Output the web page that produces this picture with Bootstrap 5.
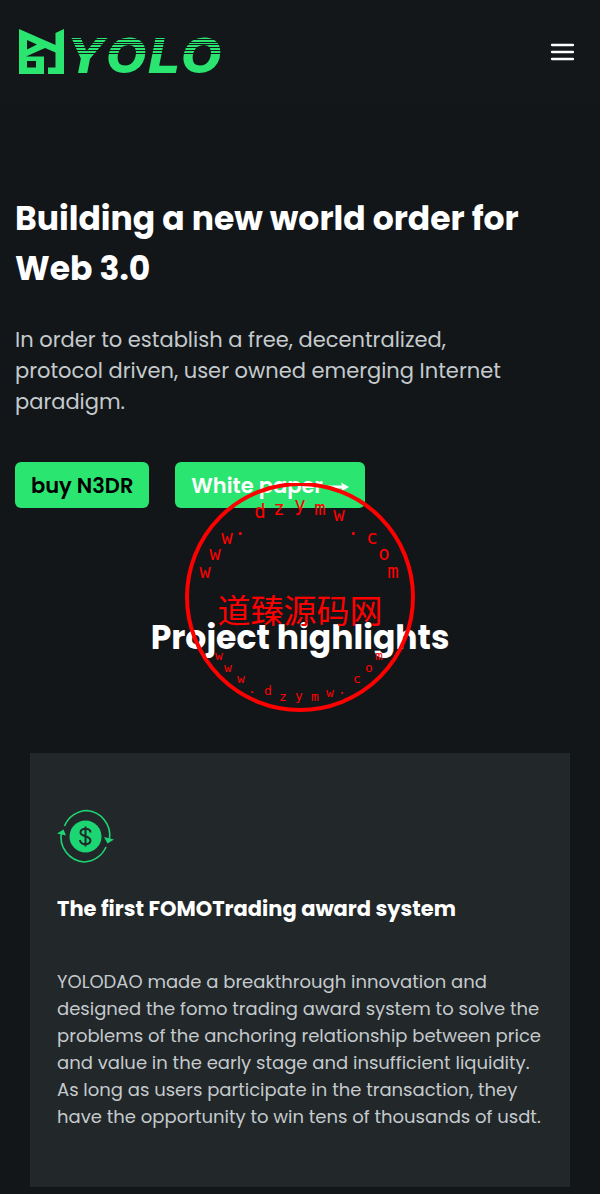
<!DOCTYPE html>
<html lang="en">
<head>
<meta charset="utf-8">
<meta name="viewport" content="width=device-width, initial-scale=1">
<title>YOLO</title>
<link href="https://cdn.jsdelivr.net/npm/bootstrap@5.3.0/dist/css/bootstrap.min.css" rel="stylesheet">
<style>
body{background:#121619;color:#fff;font-family:Poppins,Inter,"Noto Sans CJK SC",sans-serif;border-right:1px solid #fff}
.site-bar{height:104px;padding:0 26px 0 19px;background:#13171a}
.menu-btn{padding:0;border:0;background:none;color:#fff}
.hero{padding:90px 15px 0}
.hero h1,.section-title{font-size:33px;line-height:50px;font-weight:700;margin:0}
.hero h1{max-width:540px}
.lede{font-size:21px;line-height:31px;color:#c5cacd;margin:30px 0 45px;max-width:500px}
.cta{height:46px;padding:0 16px;border:0;border-radius:6px;background:#2be571;font-size:21px;font-weight:600;line-height:48px}
.cta:hover{background:#25cf65}
.cta-row{gap:26px}
.highlights{padding-top:105px}
.feature{margin:90px 30px 7px;padding:55px 27px 57px;background:#22272a}
.feature h3{font-size:21px;line-height:32px;font-weight:700;margin:28px 0 43px}
.feature p{font-size:18px;line-height:27px;color:#c5cacd;margin:0}
.stamp{top:379px;left:50%;transform:translateX(-50%);pointer-events:none;fill:red;text-anchor:middle;font-family:"DejaVu Sans Mono",monospace}
.stamp .outer-text{font-size:19px}
.stamp .inner-text{font-size:13px}
.stamp .stamp-name{font:33px "Noto Sans CJK SC",sans-serif}
.wordmark{font:italic 700 49px "Liberation Sans",sans-serif;stroke-width:2px}
</style>
</head>
<body>
<header class="site-bar d-flex align-items-center justify-content-between">
<a href="#" aria-label="YOLO home">
<svg class="d-block overflow-visible" width="204" height="46" viewBox="0 0 204 46">
<path fill="#2be571" fill-rule="evenodd" d="M0 0 36.500 16V4L45 0V45H29V38.500H36.500V23.500L26 19 7 27.500H25V45H0ZM8 11V20.500L18 15.500ZM8 32V38.500H17V32Z"/>
<text class="wordmark" y="43" x="50 88 130 163" fill="#2be571" stroke="#2be571">YOLO</text>
<path stroke="#13171a" d="M50 10.500H204M50 13.500H204M50 15.500H204M50 18.500H204M50 21.500H204M50 24.500H204"/>
</svg>
</a>
<button class="menu-btn" type="button" aria-label="Menu"><svg class="d-block" width="24" height="18" viewBox="0 0 24 18"><path stroke="currentColor" stroke-width="2.300" stroke-linecap="round" d="M2 2H23M2 9H23M2 16H23"/></svg></button>
</header>
<main class="position-relative">
<section class="hero">
<h1>Building a new world order for Web 3.0</h1>
<p class="lede">In order to establish a free, decentralized, protocol driven, user owned emerging Internet paradigm.</p>
<div class="cta-row d-flex">
<button type="button" class="btn cta text-black">buy N3DR</button>
<button type="button" class="btn cta text-white">White paper <svg width="21" height="12" viewBox="0 0 21 12" aria-hidden="true"><path fill="#fff" d="M0 4.500H14L13 1.500 21 6 13 10.500 14 7.500H0Z"/></svg></button>
</div>
</section>
<section class="highlights">
<h2 class="section-title text-center">Project highlights</h2>
<article class="feature">
<svg class="d-block" width="57" height="57" viewBox="0 0 57 57" fill="none" stroke="#1bd673" stroke-width="1.600" aria-hidden="true">
<path d="M7.500 18A25 25 0 0 1 30 2.500A25 25 0 0 1 52.500 31M49 39A25 25 0 0 1 27 54A25 25 0 0 1 4.500 24"/>
<path fill="#1bd673" stroke="none" d="M47 29 57 31.500 50.500 35.500ZM0 25.500 6.500 21.500 9 27.500Z"/>
<circle cx="28.500" cy="28.500" r="16" fill="#1bd673" stroke="none"/>
<path stroke="#22272a" stroke-width="2" d="M28.500 18.500V38.500M33.500 24.500C33.500 19.500 23.500 19.500 23.500 24.500C23.500 29 33.500 27.500 33.500 32.500C33.500 37.500 23 37.500 23 32"/>
</svg>
<h3>The first FOMOTrading award system</h3>
<p>YOLODAO made a breakthrough innovation and designed the fomo trading award system to solve the problems of the anchoring relationship between price and value in the early stage and insufficient liquidity. As long as users participate in the transaction, they have the opportunity to win tens of thousands of usdt.</p>
</article>
</section>
<svg class="stamp position-absolute" width="230" height="230" viewBox="186 483 230 230">
<circle cx="301" cy="597" r="113" fill="none" stroke="red" stroke-width="4"/>
<g class="outer-text"><text x="206 216 228 241 261 280 301 321 340 354 373 385 394" y="578 560 544 535 518 515 511 515 521 535 544 560 578">www.dzymw.com</text></g>
<text class="stamp-name" x="301" y="623">道臻源码网</text>
<g class="inner-text"><text x="220 229 242 253 269 284 300 316 331 343 358 370 380" y="660 672 683 693 695 701 700 701 697 694 683 672 660">www.dzymw.com</text></g>
</svg>
</main>
<script src="https://cdn.jsdelivr.net/npm/bootstrap@5.3.0/dist/js/bootstrap.bundle.min.js"></script>
</body>
</html>
